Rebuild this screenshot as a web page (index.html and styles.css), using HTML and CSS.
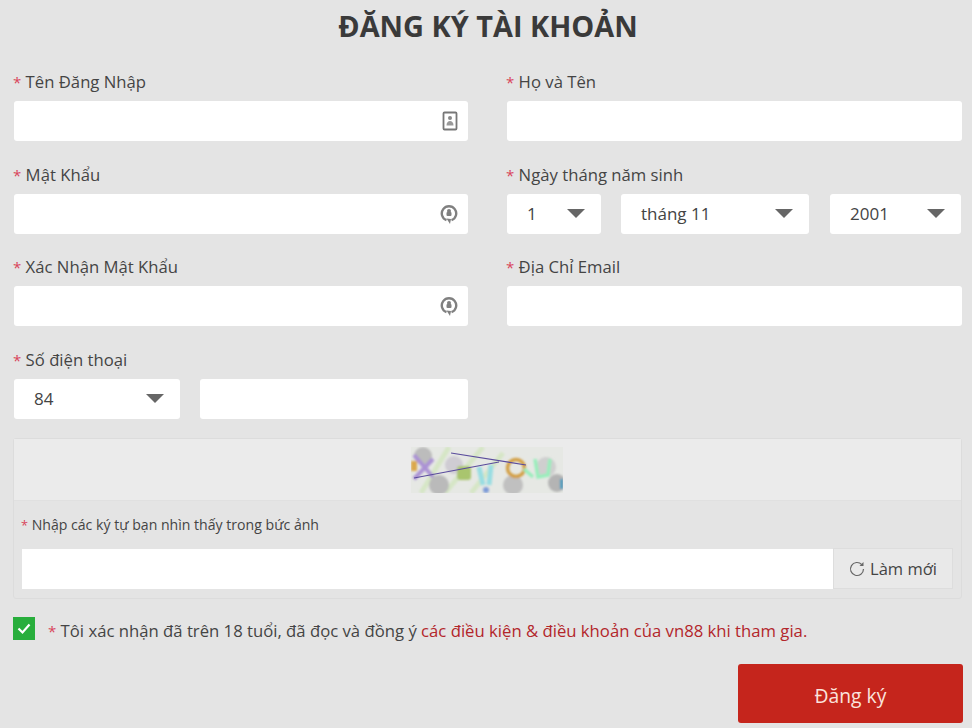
FILE: index.html
```html
<!DOCTYPE html>
<html lang="vi">
<head>
    <meta charset="UTF-8">
    <meta name="viewport" content="width=device-width, initial-scale=1.0">
    <title>Đăng ký tài khoản</title>
    <link rel="stylesheet" href="styles.css">
</head>
<body>
    <div class="dangky">
        <h1 class="tieude">ĐĂNG KÝ TÀI KHOẢN</h1>

        <div class="luoi">
            <div class="truong">
                <label class="nhan"><span class="sao">*</span> Tên Đăng Nhập</label>
                <div class="o">
                    <svg class="bieutuong" viewBox="0 0 16 20" width="16" height="20">
                        <rect x="1.500" y="1.500" width="13" height="17" rx="1" fill="none" stroke="#777" stroke-width="1.800"/>
                        <circle cx="8" cy="7" r="2" fill="#888"/>
                        <path d="M4.500 14.500c0-3 1.500-4.500 3.500-4.500s3.500 1.500 3.500 4.500z" fill="#999"/>
                    </svg>
                </div>
            </div>
            <div class="truong">
                <label class="nhan"><span class="sao">*</span> Họ và Tên</label>
                <div class="o"></div>
            </div>

            <div class="truong">
                <label class="nhan"><span class="sao">*</span> Mật Khẩu</label>
                <div class="o">
                    <svg class="bieutuong" viewBox="0 0 18 22" width="18" height="22">
                        <path d="M6.500 17.200a7.200 7.200 0 1 1 5 0" fill="none" stroke="#808080" stroke-width="2.400"/>
                        <path d="M6.500 15.500 10 21 11 16z" fill="#808080"/>
                        <circle cx="9" cy="8" r="2" fill="#808080"/>
                        <rect x="6.500" y="9" width="5" height="4" rx="1" fill="#808080"/>
                    </svg>
                </div>
            </div>
            <div class="truong">
                <label class="nhan"><span class="sao">*</span> Ngày tháng năm sinh</label>
                <div class="hang-ngay">
                    <div class="chon chon-ngay">1<i class="tamgiac"></i></div>
                    <div class="chon chon-thang">tháng 11<i class="tamgiac"></i></div>
                    <div class="chon chon-nam">2001<i class="tamgiac"></i></div>
                </div>
            </div>

            <div class="truong">
                <label class="nhan"><span class="sao">*</span> Xác Nhận Mật Khẩu</label>
                <div class="o">
                    <svg class="bieutuong" viewBox="0 0 18 22" width="18" height="22">
                        <path d="M6.500 17.200a7.200 7.200 0 1 1 5 0" fill="none" stroke="#808080" stroke-width="2.400"/>
                        <path d="M6.500 15.500 10 21 11 16z" fill="#808080"/>
                        <circle cx="9" cy="8" r="2" fill="#808080"/>
                        <rect x="6.500" y="9" width="5" height="4" rx="1" fill="#808080"/>
                    </svg>
                </div>
            </div>
            <div class="truong">
                <label class="nhan"><span class="sao">*</span> Địa Chỉ Email</label>
                <div class="o"></div>
            </div>

            <div class="truong">
                <label class="nhan"><span class="sao">*</span> Số điện thoại</label>
                <div class="hang-sdt">
                    <div class="chon chon-ma">84<i class="tamgiac"></i></div>
                    <div class="o o-sdt"></div>
                </div>
            </div>
        </div>

        <div class="captcha">
            <div class="captcha-anh">
                <svg class="anh" viewBox="0 0 152 46" width="152" height="46">
                    <defs>
                        <filter id="mo"><feGaussianBlur stdDeviation="1"/></filter>
                    </defs>
                    <rect width="152" height="46" fill="#e6e8e4"/>
                    <g filter="url(#mo)">
                        <path d="M10 46 38 0M34 46 72 0M60 46 92 6" stroke="#d6e6c6" stroke-width="5"/>
                        <circle cx="12" cy="9" r="9" fill="#bcbcbc"/>
                        <circle cx="28" cy="38" r="10" fill="#bababa"/>
                        <circle cx="43" cy="18" r="9" fill="#cfccd3"/>
                        <rect x="46" y="19" width="14" height="14" rx="3" fill="#a9c56e"/>
                        <circle cx="102" cy="38" r="10" fill="#c0c0c0"/>
                        <circle cx="135" cy="20" r="10" fill="#cfcfcf"/>
                        <circle cx="146" cy="36" r="9" fill="#b4b4b4"/>
                        <path d="M3 8 22 30M3 32 22 12" stroke="#ab92d4" stroke-width="4"/>
                        <rect x="0" y="14" width="6" height="10" fill="#dba84e"/>
                        <path d="M68 20 72 38M80 18 78 38" stroke="#98dde2" stroke-width="5"/>
                        <circle cx="75" cy="43" r="3" fill="#7d9bd8"/>
                        <circle cx="105" cy="21" r="8.500" fill="none" stroke="#d39f42" stroke-width="3.500"/>
                        <path d="M113 22 122 30M124 12 127 30 137 28 139 12" fill="none" stroke="#98eebb" stroke-width="3.500"/>
                        <rect x="149" y="32" width="3" height="10" fill="#3c9dc0"/>
                    </g>
                    <path d="M40 6 115 18M3 31 88 15" stroke="#5a4c9c" stroke-width="1.200" fill="none"/>
                </svg>
            </div>
            <div class="captcha-nhap">
                <div class="captcha-nhan"><span class="sao">*</span> Nhập các ký tự bạn nhìn thấy trong bức ảnh</div>
                <div class="captcha-hang">
                    <div class="o o-captcha"></div>
                    <div class="lammoi">
                        <svg viewBox="0 0 16 16" width="16" height="16">
                            <path d="M12.800 3.600A6.500 6.500 0 1 0 14.500 8" fill="none" stroke="#666" stroke-width="1.200"/>
                            <path d="M14.500 1v4h-4z" fill="#666"/>
                        </svg>
                        Làm mới
                    </div>
                </div>
            </div>
        </div>

        <div class="dongy">
            <span class="hop">
                <svg viewBox="0 0 22 22" width="22" height="22">
                    <path d="M5.500 11.500 9.500 15.500 16.500 7.500" fill="none" stroke="#fff" stroke-width="2.200"/>
                </svg>
            </span>
            <p class="dongy-chu"><span class="sao">*</span> Tôi xác nhận đã trên 18 tuổi, đã đọc và đồng ý <a class="lienket">các điều kiện &amp; điều khoản của vn88 khi tham gia.</a></p>
        </div>

        <div class="cuoi">
            <button class="nut">Đăng ký</button>
        </div>
    </div>
</body>
</html>
```

FILE: styles.css
```css
* {
    box-sizing: border-box;
}

html,
body {
    margin: 0;
    height: 100%;
    overflow: hidden;
}

body {
    background-color: #e4e4e4;
    color: #444;
    font-family: "Open Sans", "Noto Sans", Arial, sans-serif;
    font-size: 16px;
}

.dangky {
    padding: 0 10px 0 14px;
}

.tieude {
    margin: 0;
    height: 67px;
    padding-top: 7px;
    text-align: center;
    font-size: 28.900px;
    line-height: 38px;
    font-weight: 700;
    color: #3a3a3a;
}

/* -------------------------luoi------------------------ */
.luoi {
    display: grid;
    grid-template-columns: 454px 455px;
    column-gap: 39px;
}

.truong {
    height: 92.5px;
}

.nhan {
    display: block;
    height: 34px;
    padding-top: 2px;
    margin-left: -1px;
    font-size: 16.700px;
    line-height: 26px;
}

.sao {
    font-size: 0.9em;
    color: #d9455a;
}

.o {
    display: flex;
    align-items: center;
    justify-content: flex-end;
    height: 40px;
    padding-right: 10px;
    background-color: #fff;
    border-radius: 3px;
}

.hang-ngay,
.hang-sdt {
    display: flex;
    gap: 20px;
}

.chon {
    display: flex;
    align-items: center;
    justify-content: space-between;
    height: 40px;
    padding: 0 16px 0 20px;
    background-color: #fff;
    border-radius: 3px;
    font-size: 17px;
}

.chon-ngay {
    width: 94px;
}

.chon-thang {
    width: 188px;
}

.chon-nam {
    width: 131px;
    margin-left: 1px;
}

.chon-ma {
    width: 166px;
}

.o-sdt {
    width: 268px;
}

/* tam giac cua select */
.tamgiac {
    width: 0;
    height: 0;
    border-left: 9px solid transparent;
    border-right: 9px solid transparent;
    border-top: 9px solid #666;
}

/* -------------------------captcha------------------------ */
.captcha {
    height: 161px;
    margin: 1px 0 0 -1px;
    border: 1px solid #dcdcdc;
    border-radius: 3px;
}

.captcha-anh {
    display: flex;
    justify-content: center;
    align-items: center;
    height: 62px;
    background-color: #ebebeb;
    border-bottom: 1px solid #e0e0e0;
}

.anh {
    display: block;
    margin-left: -1px;
}

.captcha-nhap {
    padding: 0 8px;
}

.captcha-nhan {
    height: 47px;
    padding-top: 14px;
    margin-left: -1px;
    font-size: 14.100px;
    line-height: 20px;
}

.captcha-hang {
    display: flex;
    align-items: center;
}

.o-captcha {
    flex: 1;
    height: 40px;
    border-radius: 0;
}

.lammoi {
    display: flex;
    align-items: center;
    justify-content: center;
    gap: 5px;
    width: 120px;
    height: 41px;
    background-color: #e9e9e9;
    border: 1px solid #dddddd;
    font-size: 16.500px;
}

/* -------------------------dong y------------------------ */
.dongy {
    display: flex;
    align-items: center;
    height: 32px;
    margin-top: 15px;
}

.hop {
    display: block;
    width: 22px;
    height: 23px;
    margin-top: -4px;
    margin-left: -1px;
    margin-right: 13px;
    background-color: #28ae3c;
}

.hop svg {
    display: block;
}

.dongy-chu {
    margin: 0;
    font-size: 16.700px;
}

.lienket {
    color: #b3262b;
}

.cuoi {
    display: flex;
    justify-content: flex-end;
    margin: 18px -1px 0 0;
}

.nut {
    width: 225px;
    height: 59px;
    padding-top: 4px;
    border: none;
    border-radius: 3px;
    background-color: #c5251c;
    color: #fbe3dc;
    font-family: inherit;
    font-size: 19.300px;
}
```
